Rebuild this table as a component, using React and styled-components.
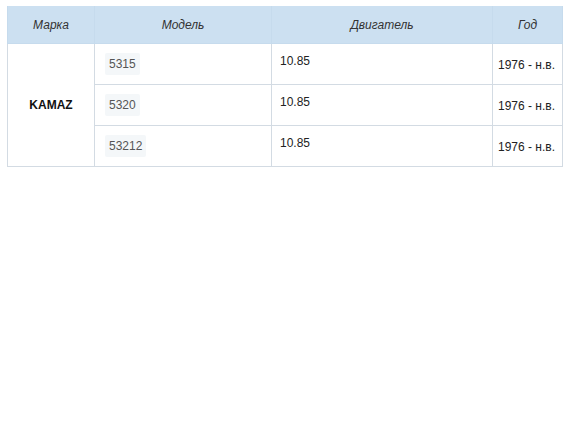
import React from 'react';
import styled, { createGlobalStyle } from 'styled-components';

const GlobalStyle = createGlobalStyle`
	body {
		margin: 0;
		background: #fff;
		font-family: 'Liberation Sans', Arial, sans-serif;
	}
`;

const rows = [
	{ model: '5315', engine: '10.85', year: '1976 - н.в.' },
	{ model: '5320', engine: '10.85', year: '1976 - н.в.' },
	{ model: '53212', engine: '10.85', year: '1976 - н.в.' },
];

const App = () => {
	return (
		<>
			<GlobalStyle />
			<Wrapper>
				<Table>
					<colgroup>
						<col style={{ width: 87 }} />
						<col style={{ width: 177 }} />
						<col style={{ width: 221 }} />
						<col style={{ width: 70 }} />
					</colgroup>
					<thead>
						<tr>
							<Th>Марка</Th>
							<Th>Модель</Th>
							<Th>Двигатель</Th>
							<Th>Год</Th>
						</tr>
					</thead>
					<tbody>
						{rows.map((item, i) => (
							<tr key={item.model}>
								{i === 0 && <Brand rowSpan={rows.length}>KAMAZ</Brand>}
								<Td>
									<Code>{item.model}</Code>
								</Td>
								<Td $align="top">{item.engine}</Td>
								<Td $year>{item.year}</Td>
							</tr>
						))}
					</tbody>
				</Table>
			</Wrapper>
		</>
	);
};

export default App;

const Wrapper = styled.div`
	padding: 6px 0 0 7px;
`;

const Table = styled.table`
	width: 555px;
	table-layout: fixed;
	border-collapse: collapse;
	font-size: 12px;
	color: #222;
`;

const Th = styled.th`
	height: 37px;
	padding: 0 8px;
	background: #cce0f1;
	border: 1px solid #c6dbed;
	border-top: none;
	font-weight: normal;
	font-style: italic;
	color: #333;
	text-align: center;
	vertical-align: middle;
`;

const Td = styled.td`
	padding: ${p => (p.$align === 'top' ? '10px 8px 0' : p.$year ? '1px 4px 0 5px' : '0 6px 0 9px')};
	border: 1px solid #d3dbe3;
	vertical-align: ${p => (p.$align === 'top' ? 'top' : 'middle')};
	white-space: nowrap;
`;

const Brand = styled.td`
	border: 1px solid #d3dbe3;
	text-align: center;
	vertical-align: middle;
	font-weight: bold;
	color: #111;
`;

const Code = styled.span`
	display: inline-block;
	margin: 9px 0 9px 1px;
	padding: 4px 4px;
	line-height: 14px;
	background: #f4f7f9;
	color: #555;
	border-radius: 2px;
`;
